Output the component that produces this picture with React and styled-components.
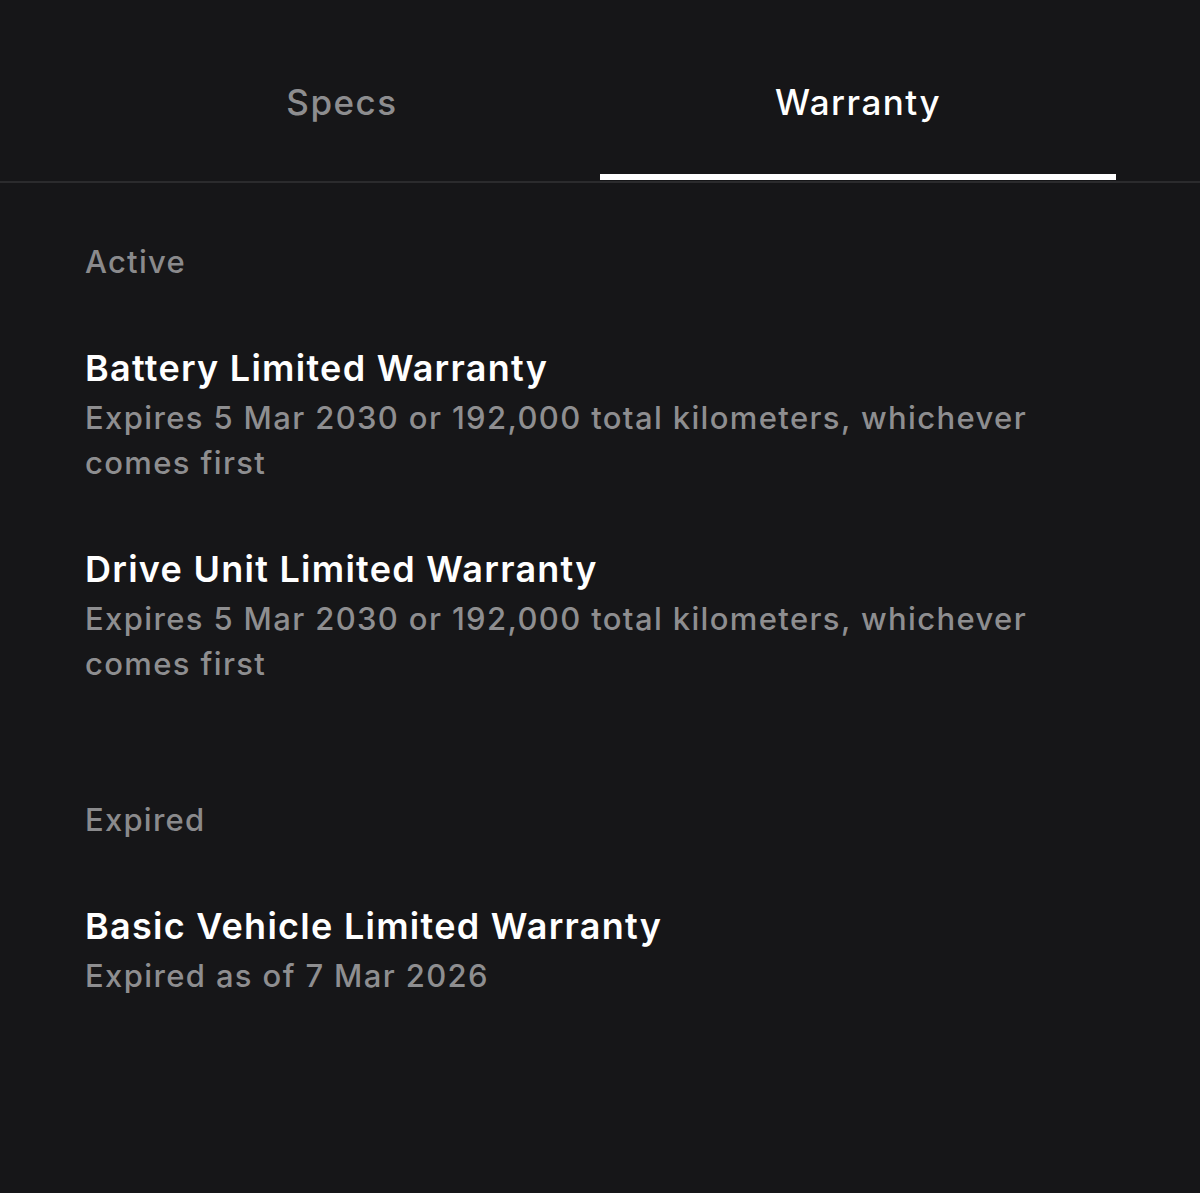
import React, { useState } from 'react';
import styled, { createGlobalStyle } from 'styled-components';

const GlobalStyle = createGlobalStyle`
    * {
        box-sizing: border-box;
    }

    body {
        margin: 0;
        background: #161618;
        font-family: Inter, "Noto Sans", "Liberation Sans", sans-serif;
        -webkit-font-smoothing: antialiased;
    }
`;

const warranties = {
    active: [
        {
            title: 'Battery Limited Warranty',
            detail: 'Expires 5 Mar 2030 or 192,000 total kilometers, whichever comes first',
        },
        {
            title: 'Drive Unit Limited Warranty',
            detail: 'Expires 5 Mar 2030 or 192,000 total kilometers, whichever comes first',
        },
    ],
    expired: [
        {
            title: 'Basic Vehicle Limited Warranty',
            detail: 'Expired as of 7 Mar 2026',
        },
    ],
};

function App() {

    const [tab, setTab] = useState('warranty');

    return (
        <Page>
            <GlobalStyle />

            <TabBar>
                <Tab active={tab === 'specs'} onClick={() => setTab('specs')}>Specs</Tab>
                <Tab active={tab === 'warranty'} onClick={() => setTab('warranty')}>Warranty</Tab>
            </TabBar>

            <Content>
                <Section>
                    <Label>Active</Label>
                    <List>
                        {warranties.active.map(w => (
                            <Item key={w.title}>
                                <Title>{w.title}</Title>
                                <Detail>{w.detail}</Detail>
                            </Item>
                        ))}
                    </List>
                </Section>

                <Section>
                    <Label>Expired</Label>
                    <List>
                        {warranties.expired.map(w => (
                            <Item key={w.title}>
                                <Title>{w.title}</Title>
                                <Detail>{w.detail}</Detail>
                            </Item>
                        ))}
                    </List>
                </Section>
            </Content>
        </Page>
    )
}

export default App;

const Page = styled.div`
    min-height: 1193px;
    background: #161618;
    color: #fff;
`;

const TabBar = styled.div`
    display: flex;
    padding: 0 84px;
    height: 183px;
    border-bottom: 2px solid #2b2b2d;
`;

const Tab = styled.div`
    flex: 1;
    position: relative;
    text-align: center;
    padding-top: 80px;
    font-size: 35px;
    line-height: 44px;
    font-weight: 500;
    letter-spacing: 0.043em;
    color: ${props => props.active ? "#ffffff" : "#8d8d8f"};
    cursor: pointer;

    &:after {
        content: "";
        position: absolute;
        left: 0;
        right: 0;
        bottom: 1px;
        height: 6px;
        background: #fff;
        opacity: ${props => props.active ? "1" : "0"};
    }
`;

const Content = styled.div`
    padding: 59px 85px 0;
    display: flex;
    flex-direction: column;
    gap: 114px;
`;

const Section = styled.div`
    display: flex;
    flex-direction: column;
    gap: 61px;
`;

const Label = styled.div`
    font-size: 31px;
    line-height: 40px;
    font-weight: 500;
    letter-spacing: 0.04em;
    color: #8a8a8c;
`;

const List = styled.div`
    display: flex;
    flex-direction: column;
    gap: 59px;
`;

const Item = styled.div`
    display: flex;
    flex-direction: column;
    gap: 2px;
`;

const Title = styled.div`
    font-size: 36px;
    line-height: 50px;
    font-weight: 600;
    letter-spacing: 0.035em;
    color: #fff;
`;

const Detail = styled.div`
    font-size: 31px;
    line-height: 45px;
    font-weight: 500;
    letter-spacing: 0.044em;
    color: #8e8e90;
`;
